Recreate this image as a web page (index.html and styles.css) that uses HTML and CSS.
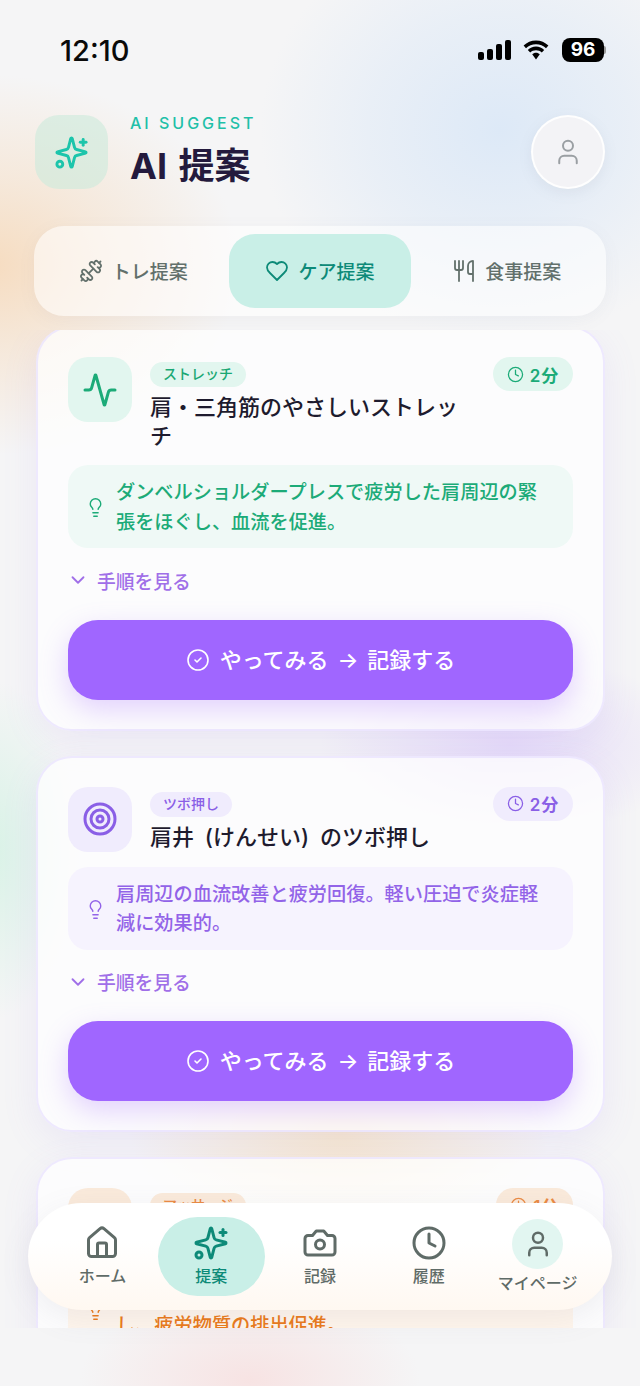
FILE: index.html
```html
<!DOCTYPE html>
<html lang="ja">

<head>
    <meta charset="utf-8">
    <title>AI 提案</title>
    <link rel="stylesheet" href="styles.css">
</head>

<body>
    <!-- icon sprite -->
    <svg class="sprite" xmlns="http://www.w3.org/2000/svg">
        <symbol id="i-sparkles" viewBox="0 0 24 24">
            <path d="M9.937 15.5A2 2 0 0 0 8.5 14.063l-6.135-1.582a.5.5 0 0 1 0-.962L8.5 9.936A2 2 0 0 0 9.937 8.5l1.582-6.135a.5.5 0 0 1 .963 0L14.063 8.5A2 2 0 0 0 15.5 9.937l6.135 1.581a.5.5 0 0 1 0 .964L15.5 14.063a2 2 0 0 0-1.437 1.437l-1.582 6.135a.5.5 0 0 1-.963 0z" />
            <path d="M20 3v4" />
            <path d="M22 5h-4" />
            <circle cx="4" cy="20" r="2" />
        </symbol>
        <symbol id="i-user" viewBox="0 0 24 24">
            <path d="M19 21v-2a4 4 0 0 0-4-4H9a4 4 0 0 0-4 4v2" />
            <circle cx="12" cy="7" r="4" />
        </symbol>
        <symbol id="i-dumbbell" viewBox="0 0 24 24">
            <g transform="translate(24 0) scale(-1 1)">
                <path d="M14.4 14.4 9.6 9.6" />
                <path d="M18.657 21.485a2 2 0 1 1-2.829-2.828l-1.767 1.768a2 2 0 1 1-2.829-2.829l6.364-6.364a2 2 0 1 1 2.829 2.829l-1.768 1.767a2 2 0 1 1 2.828 2.829z" />
                <path d="m21.5 21.5-1.4-1.4" />
                <path d="M3.9 3.9 2.5 2.5" />
                <path d="M6.404 12.768a2 2 0 1 1-2.829-2.829l1.768-1.767a2 2 0 1 1-2.828-2.829l2.828-2.828a2 2 0 1 1 2.829 2.828l1.767-1.768a2 2 0 1 1 2.829 2.829z" />
            </g>
        </symbol>
        <symbol id="i-heart" viewBox="0 0 24 24">
            <path d="M19 14c1.49-1.46 3-3.21 3-5.5A5.5 5.5 0 0 0 16.5 3c-1.76 0-3 .5-4.5 2-1.5-1.5-2.74-2-4.5-2A5.5 5.5 0 0 0 2 8.5c0 2.3 1.5 4.05 3 5.5l7 7Z" />
        </symbol>
        <symbol id="i-utensils" viewBox="0 0 24 24">
            <path d="M3 2v7c0 1.1.9 2 2 2h4a2 2 0 0 0 2-2V2" />
            <path d="M7 2v20" />
            <path d="M21 15V2a5 5 0 0 0-5 5v6c0 1.1.9 2 2 2h3Zm0 0v7" />
        </symbol>
        <symbol id="i-activity" viewBox="0 0 24 24">
            <path d="M22 12h-2.48a2 2 0 0 0-1.93 1.46l-2.35 8.36a.25.25 0 0 1-.48 0L9.24 2.18a.25.25 0 0 0-.48 0l-2.35 8.36A2 2 0 0 1 4.49 12H2" />
        </symbol>
        <symbol id="i-target" viewBox="0 0 24 24">
            <circle cx="12" cy="12" r="10" />
            <circle cx="12" cy="12" r="6" />
            <circle cx="12" cy="12" r="2" />
        </symbol>
        <symbol id="i-clock" viewBox="0 0 24 24">
            <circle cx="12" cy="12" r="10" />
            <path d="M12 6v6l4 2" />
        </symbol>
        <symbol id="i-bulb" viewBox="0 0 24 24">
            <path d="M15 14c.2-1 .7-1.7 1.5-2.5 1-.9 1.5-2.2 1.5-3.5A6 6 0 0 0 6 8c0 1 .2 2.2 1.5 3.5.7.7 1.3 1.5 1.5 2.5" />
            <path d="M9 18h6" />
            <path d="M10 22h4" />
        </symbol>
        <symbol id="i-chevron" viewBox="0 0 24 24">
            <path d="m6 9 6 6 6-6" />
        </symbol>
        <symbol id="i-check" viewBox="0 0 24 24">
            <circle cx="12" cy="12" r="10" />
            <path d="m9 12 2 2 4-4" />
        </symbol>
        <symbol id="i-home" viewBox="0 0 24 24">
            <path d="M15 21v-8a1 1 0 0 0-1-1h-4a1 1 0 0 0-1 1v8" />
            <path d="M3 10a2 2 0 0 1 .709-1.528l7-5.999a2 2 0 0 1 2.582 0l7 5.999A2 2 0 0 1 21 10v9a2 2 0 0 1-2 2H5a2 2 0 0 1-2-2z" />
        </symbol>
        <symbol id="i-camera" viewBox="0 0 24 24">
            <path d="M14.5 4h-5L7 7H4a2 2 0 0 0-2 2v9a2 2 0 0 0 2 2h16a2 2 0 0 0 2-2V9a2 2 0 0 0-2-2h-3l-2.5-3z" />
            <circle cx="12" cy="13" r="3" />
        </symbol>
    </svg>

    <div class="app">
        <div class="status-bar">
            <span class="time">12:10</span>
            <div class="status-icons">
                <div class="signal">
                    <span class="bar bar-1"></span>
                    <span class="bar bar-2"></span>
                    <span class="bar bar-3"></span>
                    <span class="bar bar-4"></span>
                </div>
                <svg class="wifi" viewBox="0 0 28 20">
                    <path d="M14 4.2c3.9 0 7.4 1.5 10 4l2.4-2.6C23.100 2.400 18.800.5 14 .5S4.900 2.400 1.600 5.600L4 8.200c2.600-2.500 6.100-4 10-4z" />
                    <path d="M14 10.200c2.300 0 4.300.9 5.800 2.300l2.400-2.600C20 7.900 17.200 6.600 14 6.600s-6 1.300-8.200 3.300l2.400 2.600c1.500-1.400 3.500-2.300 5.800-2.300z" />
                    <path d="M14 12.700c-1.500 0-2.800.6-3.800 1.500L14 19.500l3.800-5.300c-1-.9-2.300-1.500-3.800-1.500z" />
                </svg>
                <div class="battery">96</div>
                <span class="battery-cap"></span>
            </div>
        </div>

        <header class="page-header">
            <div class="header-icon"><svg class="icon"><use href="#i-sparkles" /></svg></div>
            <div class="header-text">
                <div class="eyebrow">AI SUGGEST</div>
                <h1>AI 提案</h1>
            </div>
            <div class="avatar"><svg class="icon"><use href="#i-user" /></svg></div>
        </header>

        <div class="tabs">
            <div class="tab"><svg class="icon"><use href="#i-dumbbell" /></svg><span>トレ提案</span></div>
            <div class="tab tab-active"><svg class="icon"><use href="#i-heart" /></svg><span>ケア提案</span></div>
            <div class="tab"><svg class="icon"><use href="#i-utensils" /></svg><span>食事提案</span></div>
        </div>

        <main class="scroll-area">
            <div class="card-list">
                <section class="card card-green">
                    <div class="card-head">
                        <div class="card-icon"><svg class="icon"><use href="#i-activity" /></svg></div>
                        <div class="card-meta">
                            <span class="tag">ストレッチ</span>
                            <h2>肩・三角筋のやさしいストレッチ</h2>
                        </div>
                        <div class="duration"><svg class="icon"><use href="#i-clock" /></svg>2分</div>
                    </div>
                    <div class="tip">
                        <svg class="icon"><use href="#i-bulb" /></svg>
                        <p>ダンベルショルダープレスで疲労した肩周辺の緊張をほぐし、血流を促進。</p>
                    </div>
                    <div class="toggle"><svg class="icon"><use href="#i-chevron" /></svg>手順を見る</div>
                    <button class="try-btn"><svg class="icon"><use href="#i-check" /></svg><span>やってみる → 記録する</span></button>
                </section>

                <section class="card card-purple">
                    <div class="card-head">
                        <div class="card-icon"><svg class="icon"><use href="#i-target" /></svg></div>
                        <div class="card-meta">
                            <span class="tag">ツボ押し</span>
                            <h2>肩井 (けんせい) のツボ押し</h2>
                        </div>
                        <div class="duration"><svg class="icon"><use href="#i-clock" /></svg>2分</div>
                    </div>
                    <div class="tip">
                        <svg class="icon"><use href="#i-bulb" /></svg>
                        <p>肩周辺の血流改善と疲労回復。軽い圧迫で炎症軽減に効果的。</p>
                    </div>
                    <div class="toggle"><svg class="icon"><use href="#i-chevron" /></svg>手順を見る</div>
                    <button class="try-btn"><svg class="icon"><use href="#i-check" /></svg><span>やってみる → 記録する</span></button>
                </section>

                <section class="card card-orange">
                    <div class="card-head">
                        <div class="card-icon"><svg class="icon"><use href="#i-heart" /></svg></div>
                        <div class="card-meta">
                            <span class="tag">マッサージ</span>
                            <h2>肩まわりのセルフマッサージ</h2>
                        </div>
                        <div class="duration"><svg class="icon"><use href="#i-clock" /></svg>1分</div>
                    </div>
                    <div class="tip">
                        <svg class="icon"><use href="#i-bulb" /></svg>
                        <p>肩まわりの筋膜をやさしくゆるめて、血流を改善し、疲労物質の排出促進。</p>
                    </div>
                </section>
            </div>
        </main>

        <nav class="bottom-nav">
            <div class="nav-item"><svg class="icon"><use href="#i-home" /></svg><span>ホーム</span></div>
            <div class="nav-item nav-active"><svg class="icon"><use href="#i-sparkles" /></svg><span>提案</span></div>
            <div class="nav-item"><svg class="icon"><use href="#i-camera" /></svg><span>記録</span></div>
            <div class="nav-item"><svg class="icon"><use href="#i-clock" /></svg><span>履歴</span></div>
            <div class="nav-item nav-mypage">
                <div class="nav-circle"><svg class="icon"><use href="#i-user" /></svg></div>
                <span>マイページ</span>
            </div>
        </nav>
    </div>
</body>

</html>
```

FILE: styles.css
```css
* {
    box-sizing: border-box;
}

body {
    margin: 0;
    padding: 0;
    font-family: Inter, "Noto Sans CJK JP", sans-serif;
}

.sprite {
    display: none;
}

.icon {
    fill: none;
    stroke: currentColor;
    stroke-width: 2;
    stroke-linecap: round;
    stroke-linejoin: round;
    flex-shrink: 0;
}

.app {
    position: relative;
    width: 640px;
    height: 1386px;
    overflow: hidden;
    background-color: #f5f5f6;
    background-image:
        radial-gradient(ellipse 250px 190px at -10px 265px, #f6dcc0 0%, rgba(246, 220, 192, 0.5) 45%, rgba(246, 220, 192, 0) 100%),
        radial-gradient(ellipse 240px 210px at 500px 130px, #dde9f7 0%, rgba(221, 233, 247, 0.5) 55%, rgba(221, 233, 247, 0) 100%),
        radial-gradient(ellipse 90px 170px at -10px 850px, #d8f2e6 0%, rgba(216, 242, 230, 0) 100%),
        radial-gradient(ellipse 190px 90px at 510px 745px, #e6dcf8 0%, rgba(230, 220, 248, 0) 100%),
        radial-gradient(ellipse 210px 100px at 340px 1135px, #f7e8cf 0%, rgba(247, 232, 207, 0) 100%),
        radial-gradient(ellipse 170px 90px at 250px 1380px, #f7e3e3 0%, rgba(247, 227, 227, 0) 100%);
}

/* status bar */
.status-bar {
    height: 115px;
    padding: 38px 34px 0 60px;
    display: flex;
    justify-content: space-between;
    align-items: flex-start;
}

.time {
    font-size: 29px;
    font-weight: 500;
    line-height: 25px;
    color: #0a0a0a;
}

.status-icons {
    display: flex;
    align-items: center;
    height: 24px;
}

.signal {
    display: flex;
    align-items: flex-end;
    gap: 3px;
    height: 20px;
    margin-right: 11px;
}

.bar {
    width: 6px;
    background-color: #000;
    border-radius: 2px;
}

.bar-1 {
    height: 8px;
}

.bar-2 {
    height: 11px;
}

.bar-3 {
    height: 16px;
}

.bar-4 {
    height: 20px;
}

.wifi {
    width: 28px;
    height: 20px;
    fill: #000;
    margin-right: 12px;
}

.battery {
    width: 42px;
    height: 24px;
    background-color: #000;
    border-radius: 8px;
    color: #fff;
    font-size: 19px;
    font-weight: 700;
    line-height: 24px;
    text-align: center;
}

.battery-cap {
    width: 2px;
    height: 8px;
    background-color: #9a9a9a;
    border-radius: 0 2px 2px 0;
}

/* header */
.page-header {
    display: flex;
    align-items: center;
    height: 74px;
    padding: 0 35px;
}

.header-icon {
    width: 73px;
    height: 74px;
    border-radius: 24px;
    background-color: rgba(205, 234, 220, 0.62);
    display: flex;
    align-items: center;
    justify-content: center;
    color: #1cc5ab;
}

.header-icon .icon {
    width: 35px;
    height: 35px;
}

.header-text {
    flex: 1;
    margin-left: 22px;
}

.eyebrow {
    font-size: 16px;
    font-weight: 500;
    letter-spacing: 3px;
    line-height: 16px;
    color: #1fc0a8;
}

h1 {
    margin: 12px 0 0;
    font-size: 36px;
    font-weight: 700;
    word-spacing: 3px;
    line-height: 46px;
    color: #241a3d;
}

.avatar {
    width: 74px;
    height: 74px;
    border-radius: 50%;
    background-color: #f3f3f6;
    border: 2.5px solid rgba(255, 255, 255, 0.9);
    box-shadow: 0 4px 14px rgba(120, 130, 150, 0.1);
    display: flex;
    align-items: center;
    justify-content: center;
    color: #9a9fa3;
}

.avatar .icon {
    width: 30px;
    height: 30px;
    stroke-width: 1.6;
}

/* tabs */
.tabs {
    display: grid;
    grid-template-columns: repeat(3, 1fr);
    gap: 4px;
    height: 90px;
    margin: 37px 34px 0;
    padding: 8px;
    border-radius: 30px;
    background-color: rgba(255, 255, 255, 0.55);
    box-shadow: 0 4px 18px rgba(120, 120, 140, 0.06);
}

.tab {
    display: flex;
    align-items: center;
    justify-content: center;
    gap: 9px;
    border-radius: 26px;
    font-size: 19px;
    font-weight: 500;
    color: #62706b;
}

.tab span {
    padding-bottom: 2px;
}

.tab .icon {
    width: 24px;
    height: 24px;
    stroke-width: 1.8;
}

.tab-active {
    background-color: #c9efe7;
    color: #0d8a78;
}

/* cards */
.scroll-area {
    height: 998px;
    margin-top: 14px;
    padding: 0 35px 0 36px;
    overflow: hidden;
}

.card-list {
    display: flex;
    flex-direction: column;
    gap: 25px;
    margin-top: -4px;
}

.card {
    padding: 29px 30px 29px;
    border-radius: 36px;
    border: 2px solid rgba(228, 220, 255, 0.6);
    background-color: rgba(255, 255, 255, 0.72);
    box-shadow: 0 10px 36px rgba(150, 120, 240, 0.1);
}

.card-head {
    display: flex;
    align-items: flex-start;
}

.card-icon {
    width: 64px;
    height: 65px;
    border-radius: 20px;
    display: flex;
    align-items: center;
    justify-content: center;
    flex-shrink: 0;
}

.card-icon .icon {
    width: 36px;
    height: 36px;
}

.card-meta {
    flex: 1;
    min-width: 0;
    margin: 5px 16px 0 18px;
}

.tag {
    display: block;
    width: fit-content;
    height: 25px;
    padding: 0 13px;
    border-radius: 13px;
    font-size: 14px;
    font-weight: 500;
    line-height: 24px;
}

h2 {
    margin: 6px 0 0;
    font-size: 22px;
    font-weight: 500;
    word-spacing: 5px;
    line-height: 28.6px;
    color: #1e1b2e;
}

.duration {
    display: flex;
    align-items: center;
    gap: 6px;
    height: 34px;
    padding: 0 14px;
    border-radius: 17px;
    font-size: 17px;
    font-weight: 600;
    letter-spacing: 0.8px;
    flex-shrink: 0;
}

.duration .icon {
    width: 17px;
    height: 17px;
    stroke-width: 1.8;
}

.tip {
    display: flex;
    align-items: center;
    gap: 10px;
    margin-top: 15px;
    padding: 13px 22px 11px 17px;
    border-radius: 20px;
}

.tip .icon {
    width: 21px;
    height: 21px;
    stroke-width: 1.6;
}

.tip p {
    margin: 0;
    font-size: 19.2px;
    font-weight: 500;
    line-height: 29.5px;
}

.toggle {
    display: flex;
    align-items: center;
    gap: 8px;
    height: 28px;
    margin-top: 18px;
    margin-left: -1px;
    font-size: 18.8px;
    font-weight: 500;
    color: #a06fe8;
}

.toggle .icon {
    width: 22px;
    height: 22px;
}

.try-btn {
    display: flex;
    align-items: center;
    justify-content: center;
    gap: 10px;
    width: 100%;
    height: 80px;
    margin-top: 25.5px;
    border: none;
    border-radius: 30px;
    background-color: #a066ff;
    color: #fff;
    font-family: inherit;
    font-size: 22px;
    font-weight: 500;
    word-spacing: 3px;
    box-shadow: 0 10px 28px rgba(160, 102, 255, 0.28);
}

.try-btn span {
    padding-bottom: 4px;
}

.try-btn .icon {
    width: 24px;
    height: 24px;
    stroke-width: 1.6;
}

.card-green .card-icon,
.card-green .duration {
    background-color: #e2f6ef;
    color: #1cab78;
}

.card-green .tag {
    background-color: #e2f6ef;
    color: #1aa874;
}

.card-green .tip {
    background-color: #eff9f6;
    color: #1cab78;
}

.card-purple .card-icon,
.card-purple .duration,
.card-purple .tag {
    background-color: #f0ecfd;
    color: #8a5fe6;
}

.card-purple .tip {
    background-color: #f6f3fe;
    color: #9263e8;
}

.card-orange .card-icon,
.card-orange .duration,
.card-orange .tag {
    background-color: #faeadb;
    color: #ea8a44;
}

.card-orange .tip {
    background-color: #fef5ec;
    color: #ea7a1a;
}

/* bottom nav */
.bottom-nav {
    position: absolute;
    left: 28px;
    top: 1203px;
    width: 584px;
    height: 107px;
    padding: 0 20px;
    display: grid;
    grid-template-columns: repeat(5, 1fr);
    align-items: center;
    border-radius: 54px;
    background-color: #fff;
    background-image: linear-gradient(180deg, #ffffff 35%, #fff8f1 100%);
    box-shadow: 0 8px 30px rgba(120, 120, 140, 0.1);
}

.nav-item {
    display: flex;
    flex-direction: column;
    align-items: center;
    gap: 3px;
    padding: 8px 0;
    color: #5f6b67;
    font-size: 16px;
    font-weight: 500;
    line-height: 24px;
}

.nav-item .icon {
    width: 36px;
    height: 36px;
}

.nav-active {
    margin: 0 1px;
    border-radius: 40px;
    background-color: #c9efe7;
    color: #0d8a78;
}

.nav-mypage {
    gap: 2px;
    padding: 0;
    white-space: nowrap;
}

.nav-circle {
    width: 51px;
    height: 50px;
    border-radius: 50%;
    background-color: #e2f6f1;
    display: flex;
    align-items: center;
    justify-content: center;
}

.nav-circle .icon {
    width: 30px;
    height: 30px;
}
```
